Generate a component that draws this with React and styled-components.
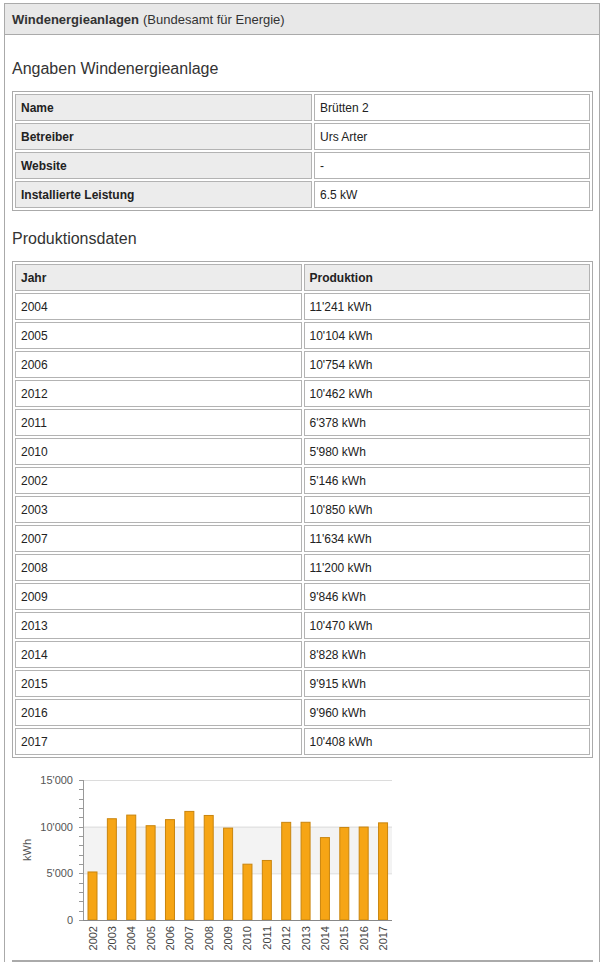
import React from 'react'
import styled, { createGlobalStyle } from 'styled-components'

const GlobalStyle = createGlobalStyle`
  body {
    margin: 0;
    background: #fff;
    font-family: "Liberation Sans", Arial, sans-serif;
    color: #222;
  }
`

const details = [
  ['Name', 'Brütten 2'],
  ['Betreiber', 'Urs Arter'],
  ['Website', '-'],
  ['Installierte Leistung', '6.5 kW'],
]

const production = [
  [2004, 11241], [2005, 10104], [2006, 10754], [2012, 10462],
  [2011, 6378], [2010, 5980], [2002, 5146], [2003, 10850],
  [2007, 11634], [2008, 11200], [2009, 9846], [2013, 10470],
  [2014, 8828], [2015, 9915], [2016, 9960], [2017, 10408],
]

const fmt = (n) => String(n).replace(/\B(?=(\d{3})+(?!\d))/g, "'")

const Page = styled.div`
  padding: 3px 4px 0 4px;
`

const Panel = styled.section`
  border: 1px solid #aaa;
  border-bottom: none;
`

const PanelHeader = styled.header`
  background: #e8e8e8;
  border-bottom: 1px solid #aaa;
  height: 30px;
  display: flex;
  align-items: center;
  padding: 0 7px;
  font-size: 13px;
  color: #333;

  strong {
    margin-right: 4px;
  }
`

const Content = styled.div`
  padding: 7px 6px 0 7px;
`

const Heading = styled.h3`
  margin: ${({ $mt }) => $mt || 17}px 0 12px;
  font-size: 16px;
  line-height: 20px;
  font-weight: normal;
  color: #333;
`

const Table = styled.table`
  width: 100%;
  border: 1px solid #aaa;
  border-spacing: 2px;
  font-size: 12px;
  margin-bottom: ${({ $mb }) => $mb || 0}px;
`

const Cell = styled.td`
  border: 1px solid #b3b3b3;
  padding: 0 5px;
  box-sizing: border-box;
  height: 27px;
  background: ${({ $head }) => ($head ? '#ececec' : '#fff')};
  font-weight: ${({ $head }) => ($head ? 'bold' : 'normal')};
  width: ${({ $w }) => $w || 'auto'};
  color: #222;
`

const ChartBox = styled.div`
  height: 192px;
`

const BottomRule = styled.div`
  margin-top: 2px;
  border-top: 2px solid #aaa;
`

const Chart = () => {
  const years = [...production].sort((a, b) => a[0] - b[0])
  const top = 14
  const bottom = 154
  const y = (v) => bottom - (v / 15000) * (bottom - top)
  const axisX = 71
  const right = 380
  const step = 19.37
  const ticks = []
  for (let v = 0; v <= 15000; v += 1000) ticks.push(v)
  return (
    <svg width="390" height="192" style={{ display: 'block' }}>
      <rect x={axisX} y={y(10000)} width={right - axisX} height={y(5000) - y(10000)} fill="#f3f3f3" />
      {[5000, 10000, 15000].map((v) => (
        <line key={v} x1={axisX} x2={right} y1={y(v) + 0.5} y2={y(v) + 0.5} stroke="#dcdcdc" />
      ))}
      {ticks.map((v) => (
        <line key={v} x1={axisX - 4} x2={axisX} y1={Math.round(y(v)) + 0.5} y2={Math.round(y(v)) + 0.5} stroke="#999" />
      ))}
      {[0, 5000, 10000, 15000].map((v) => (
        <text key={v} x={61} y={y(v) + 4} textAnchor="end" fontSize="11" fill="#555" fontFamily="Liberation Sans, Arial, sans-serif">
          {fmt(v)}
        </text>
      ))}
      <text x={19} y={84} transform="rotate(-90 19 84)" textAnchor="middle" fontSize="11" fill="#555" fontFamily="Liberation Sans, Arial, sans-serif">
        kWh
      </text>
      {years.map(([yr, v], i) => {
        const cx = 80.5 + i * step
        return (
          <g key={yr}>
            <rect x={cx - 4.5} y={y(v)} width={9} height={bottom - y(v)} fill="#f6a515" stroke="#c9850e" strokeWidth="1" />
            <text
              x={cx + 4}
              y={160}
              transform={`rotate(-90 ${cx + 4} 160)`}
              textAnchor="end"
              fontSize="11"
              fill="#444"
              fontFamily="Liberation Sans, Arial, sans-serif"
            >
              {yr}
            </text>
          </g>
        )
      })}
      <line x1={axisX + 0.5} x2={axisX + 0.5} y1={top} y2={bottom} stroke="#999" />
      <line x1={axisX} x2={right} y1={bottom + 0.5} y2={bottom + 0.5} stroke="#888" />
    </svg>
  )
}

const App = () => (
  <Page>
    <GlobalStyle />
    <Panel>
      <PanelHeader>
        <strong>Windenergieanlagen</strong> (Bundesamt für Energie)
      </PanelHeader>
      <Content>
        <Heading>Angaben Windenergieanlage</Heading>
        <Table>
          <tbody>
            {details.map(([k, v]) => (
              <tr key={k}>
                <Cell $head $w="297px">{k}</Cell>
                <Cell>{v}</Cell>
              </tr>
            ))}
          </tbody>
        </Table>
        <Heading $mt={18}>Produktionsdaten</Heading>
        <Table $mb={8}>
          <tbody>
            <tr>
              <Cell $head $w="50%">Jahr</Cell>
              <Cell $head $w="50%">Produktion</Cell>
            </tr>
            {production.map(([yr, v]) => (
              <tr key={yr}>
                <Cell>{yr}</Cell>
                <Cell>{fmt(v)} kWh</Cell>
              </tr>
            ))}
          </tbody>
        </Table>
        <ChartBox>
          <Chart />
        </ChartBox>
        <BottomRule />
      </Content>
    </Panel>
  </Page>
)

export default App
